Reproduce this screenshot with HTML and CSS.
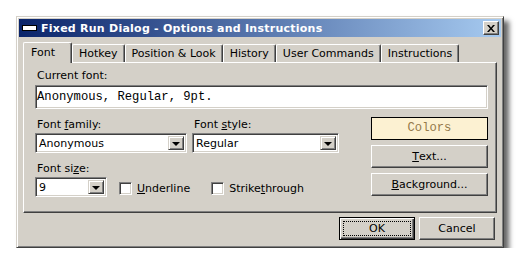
FILE: index.html
```html
<!DOCTYPE html><html><head>
    <meta name="viewport" content="width=device-width, initial-scale=1">
    <title>Fixed Run Dialog - Options and Instructions</title>
    <link rel="stylesheet" href="styles.css">
  </head><body>
    <div class="window">
      <div class="titlebar">
        <svg class="app-icon" width="15" height="6" viewBox="0 0 15 6"><rect x="0.5" y="0.5" width="14" height="5" fill="#fff" stroke="#000"/></svg>
        <span class="title">Fixed Run Dialog - Options and Instructions</span>
        <div class="close"><svg width="8" height="7" viewBox="0 0 8 7"><path d="M0 0h2l2 2.5l2-2.5h2l-3 3.5l3 3.5h-2l-2-2.5l-2 2.5h-2l3-3.5z" fill="#000"/></svg></div>
      </div>
      <div class="dialog">
        <div class="tabs">
          <div class="tab active">Font</div>
          <div class="tab">Hotkey</div>
          <div class="tab">Position &amp; Look</div>
          <div class="tab">History</div>
          <div class="tab">User Commands</div>
          <div class="tab">Instructions</div>
        </div>
        <div class="panel">
          <div class="label">Current font:</div>
          <div class="current-font">Anonymous, Regular, 9pt.</div>
          <div class="options">
            <div class="fields">
              <div class="field">
                <div class="label">Font <u>f</u>amily:</div>
                <div class="combo family"><span class="value">Anonymous</span><span class="drop"></span></div>
              </div>
              <div class="field">
                <div class="label">Font <u>s</u>tyle:</div>
                <div class="combo style"><span class="value">Regular</span><span class="drop"></span></div>
              </div>
              <div class="field wide">
                <div class="label">Font si<u>z</u>e:</div>
                <div class="size-row">
                  <div class="combo size"><span class="value">9</span><span class="drop"></span></div>
                  <label class="check"><span class="box"></span><u>U</u>nderline</label>
                  <label class="check"><span class="box"></span>Strike<u>t</u>hrough</label>
                </div>
              </div>
            </div>
            <div class="color-buttons">
              <div class="btn colors">Colors</div>
              <div class="btn"><u>T</u>ext...</div>
              <div class="btn"><u>B</u>ackground...</div>
            </div>
          </div>
        </div>
        <div class="actions">
          <div class="btn default"><span class="focus">OK</span></div>
          <div class="btn">Cancel</div>
        </div>
      </div>
    </div>
  </body></html>
```
FILE: styles.css
```css
body {margin: 0; background: #fff; font-family: "DejaVu Sans", Verdana, sans-serif; font-size: 11px; line-height: 13px; color: #000;}
u {text-decoration: underline; text-underline-offset: 1px;}

.window {width: 488px; height: 232px; box-sizing: border-box; margin: 16px 0 0 16px; padding: 2px; background: #d4d0c8; border: 1px solid; border-color: #d4d0c8 #404040 #404040 #d4d0c8; box-shadow: inset 1px 1px #fff, inset -1px -1px #808080, 5px 5px 5px rgba(0,0,0,.6); display: flex; flex-direction: column;}

.titlebar {height: 18px; display: flex; align-items: center; background: linear-gradient(to right, #0a246a, #a6caf0);}
.app-icon {margin: 0 4px 0 3px;}
.title {flex: 1; color: #fff; font-weight: bold; letter-spacing: .25px;}
.close {width: 16px; height: 14px; box-sizing: border-box; margin-right: 2px; display: flex; align-items: center; justify-content: center; background: #d4d0c8; border: 1px solid; border-color: #fff #404040 #404040 #fff; box-shadow: inset -1px -1px #808080;}

.dialog {flex: 1; display: flex; flex-direction: column; padding: 5px 4px 0 4px;}

.tabs {display: flex; align-items: flex-end; height: 20px;}
.tab {height: 18px; box-sizing: border-box; padding: 0 6px; display: flex; align-items: center; border: 1px solid; border-bottom: 0; border-color: #fff #404040 #fff #fff; box-shadow: inset -1px 0 #808080; border-radius: 2px 2px 0 0;}
.tab.active {height: 21px; margin-bottom: -1px; padding: 0 16px 2px 7px; background: #d4d0c8; position: relative;}

.panel {height: 151px; box-sizing: border-box; padding: 6px 8px 0 11px; border: 1px solid; border-color: #fff #404040 #404040 #fff; box-shadow: inset -1px -1px #808080;}

.label {padding-left: 2px;}
.current-font {height: 24px; box-sizing: border-box; margin-top: 3px; padding: 0 1px; display: flex; align-items: center; background: #fff; font-family: "Liberation Mono", "Courier New", monospace; font-size: 12.2px; border: 1px solid; border-color: #808080 #fff #fff #808080; box-shadow: inset 1px 1px #404040, inset -1px -1px #d4d0c8;}

.options {display: flex; justify-content: space-between; margin-top: 8px;}
.fields {display: grid; grid-template-columns: 152px 147px; column-gap: 5px; row-gap: 9px; padding-top: 1px;}
.field .label {margin-bottom: 2px;}
.field.wide {grid-column: span 2;}

.combo {height: 20px; box-sizing: border-box; display: flex; background: #fff; border: 1px solid; border-color: #808080 #fff #fff #808080; box-shadow: inset 1px 1px #404040, inset -1px -1px #d4d0c8; padding: 2px;}
.combo .value {flex: 1; padding-left: 1px; line-height: 16px;}
.combo .drop {width: 16px; box-sizing: border-box; background: #d4d0c8; border: 1px solid; border-color: #d4d0c8 #404040 #404040 #d4d0c8; box-shadow: inset 1px 1px #fff, inset -1px -1px #808080; display: flex; align-items: center; justify-content: center;}
.combo .drop:after {content: ""; border: 4px solid transparent; border-top-color: #000; border-bottom: 0; margin-top: 1px;}
.combo.size {width: 72px;}

.size-row {display: flex; align-items: center;}
.check {display: flex; align-items: center; margin-left: 12px; padding-top: 3px;}
.check + .check {margin-left: 21px;}
.check .box {width: 13px; height: 13px; box-sizing: border-box; margin-right: 5px; background: #fff; border: 1px solid; border-color: #808080 #fff #fff #808080; box-shadow: inset 1px 1px #404040, inset -1px -1px #d4d0c8;}

.color-buttons {width: 117px; display: flex; flex-direction: column; gap: 5px;}
.btn {height: 23px; box-sizing: border-box; display: flex; align-items: center; justify-content: center; background: #d4d0c8; border: 1px solid; border-color: #fff #404040 #404040 #fff; box-shadow: inset -1px -1px #808080;}
.btn.colors {background: #fcf1d2; border-color: #000; box-shadow: none; color: #94794a; font-family: "Liberation Mono", "Courier New", monospace; font-size: 12.2px;}

.actions {display: flex; justify-content: flex-end; gap: 4px; margin-top: 4px; padding-right: 2px;}
.actions .btn {width: 76px;}
.btn.default {border: 1px solid #000; box-shadow: inset 1px 1px #fff, inset -1px -1px #404040, inset -2px -2px #808080; padding: 3px;}
.btn.default .focus {flex: 1; align-self: stretch; display: flex; align-items: center; justify-content: center; border: 1px dotted #000;}
```
